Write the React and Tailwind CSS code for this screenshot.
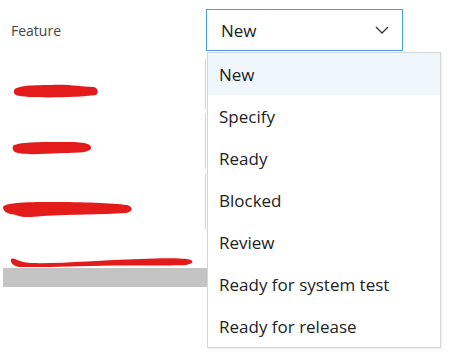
import React from 'react';

const options = ['New', 'Specify', 'Ready', 'Blocked', 'Review', 'Ready for system test', 'Ready for release'];

// red redaction strokes over the hidden field labels
const Scribble = ({ width, height, d }) => (
  <svg width={width} height={height} viewBox={`0 0 ${width} ${height}`} className="block">
    <path d={d} fill="#e31b1b" />
  </svg>
);

const ChevronDown = () => (
  <svg width="14" height="8" viewBox="0 0 14 8" fill="none">
    <path d="M1 1l6 6 6-6" stroke="#333" strokeWidth="1.3" />
  </svg>
);

export default function App() {
  return (
    <div className="relative w-[450px] h-[363px] bg-white overflow-hidden" style={{ fontFamily: '"Open Sans", "Noto Sans", sans-serif' }}>
      <div className="flex items-center h-[42px] mt-[9px]">
        <span className="w-[206px] pl-[11px] text-[14px] text-[#444]">Feature</span>
        <div className="w-[197px] h-[42px] border border-[#4a9ee3] flex items-center justify-between pl-[14px] pr-[13px]">
          <span className="text-[17px] text-[#222] pt-[2px]">New</span>
          <ChevronDown />
        </div>
      </div>

      {/* hidden fields behind the open list */}
      <div className="flex flex-col">
        <div className="flex h-[58px] items-end">
          <div className="w-[205px] pb-[11px] pl-[11px]">
            <Scribble width={88} height={14} d="M3 7 C3 2 18 1 40 1 C58 0 70 3 82 3 C87 3 88 9 85 11 C70 13 40 14 18 13 C6 12 2 11 3 7 Z" />
          </div>
          <div className="h-[50px] border-l border-[#d6d6d6]" />
        </div>
        <div className="flex h-[60px] items-end">
          <div className="w-[205px] pb-[14px] pl-[12px]">
            <Scribble width={80} height={14} d="M1 5 C4 1 30 1 50 1 C66 1 77 1 79 6 C80 11 70 12 50 12 C30 13 15 14 6 12 C1 11 0 8 1 5 Z" />
          </div>
          <div className="h-[56px] border-l border-[#d6d6d6]" />
        </div>
        <div className="flex h-[60px] items-end">
          <div className="w-[205px] pb-[11px] pl-[2px]">
            <Scribble width={131} height={17} d="M1 7 C0 2 20 1 50 1 C80 1 110 2 125 4 C131 6 132 10 124 12 C100 14 70 13 40 15 C25 17 18 16 14 14 C8 13 2 12 1 7 Z" />
          </div>
          <div className="h-[56px] border-l border-[#d6d6d6]" />
        </div>
        <div className="flex items-end h-[58px]">
          <div className="w-[205px] flex flex-col">
            <div className="pl-[10px]">
              <Scribble width={183} height={11} d="M1 2 C4 0 8 5 20 6 C50 7 90 3 130 2 C155 1 175 1 181 3 C184 5 182 7 176 8 C150 9 110 8 80 9 C50 10 25 10 12 10 C4 10 0 6 1 2 Z" />
            </div>
            <div className="h-[19px] ml-[3px] bg-[#c4c4c4]" />
          </div>
          <div className="h-[19px] w-[2px] bg-[#c4c4c4]" />
        </div>
      </div>

      {/* open dropdown */}
      <ul className="absolute left-[207px] top-[52px] w-[234px] bg-white border border-[#d6d6d6] shadow-[1px_1px_2px_rgba(0,0,0,0.08)]">
        {options.map((opt, i) => (
          <li
            key={opt}
            className={`h-[42px] flex items-center pl-[11px] pt-[2px] text-[17px] text-[#222] ${i === 0 ? 'bg-[#eff6fc]' : ''}`}
          >
            {opt}
          </li>
        ))}
      </ul>
    </div>
  );
}
